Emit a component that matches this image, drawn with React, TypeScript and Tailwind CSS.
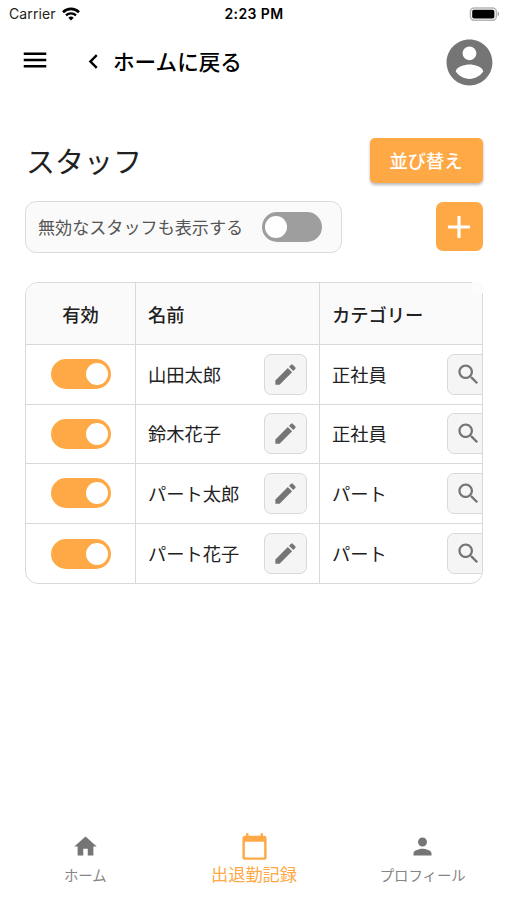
import React, { useState } from 'react';
import clsx from 'clsx';

interface Staff {
  id: number;
  name: string;
  category: string;
  enabled: boolean;
}

const initialStaff: Staff[] = [
  { id: 1, name: '山田太郎', category: '正社員', enabled: true },
  { id: 2, name: '鈴木花子', category: '正社員', enabled: true },
  { id: 3, name: 'パート太郎', category: 'パート', enabled: true },
  { id: 4, name: 'パート花子', category: 'パート', enabled: true },
];

const paths = {
  menu: 'M3 18h18v-2H3v2zm0-5h18v-2H3v2zm0-7v2h18V6H3z',
  back: 'M15.41 7.41 14 6l-6 6 6 6 1.41-1.41L10.83 12z',
  account:
    'M12 2C6.48 2 2 6.48 2 12s4.48 10 10 10 10-4.48 10-10S17.52 2 12 2zm0 3c1.66 0 3 1.34 3 3s-1.34 3-3 3-3-1.34-3-3 1.34-3 3-3zm0 14.2c-2.5 0-4.71-1.28-6-3.22.03-1.99 4-3.08 6-3.08 1.99 0 5.97 1.09 6 3.08-1.29 1.94-3.5 3.22-6 3.22z',
  add: 'M19 13h-6v6h-2v-6H5v-2h6V5h2v6h6v2z',
  edit: 'M3 17.25V21h3.75L17.81 9.94l-3.75-3.75L3 17.25zM20.71 7.04c.39-.39.39-1.02 0-1.41l-2.34-2.34a.9959.9959 0 0 0-1.41 0l-1.83 1.83 3.75 3.75 1.83-1.83z',
  search:
    'M15.5 14h-.79l-.28-.27C15.41 12.59 16 11.11 16 9.5 16 5.91 13.09 3 9.5 3S3 5.91 3 9.5 5.91 16 9.5 16c1.61 0 3.09-.59 4.23-1.57l.27.28v.79l5 4.99L20.49 19l-4.99-5zm-6 0C7.01 14 5 11.99 5 9.5S7.01 5 9.5 5 14 7.01 14 9.5 11.99 14 9.5 14z',
  home: 'M10 20v-6h4v6h5v-8h3L12 3 2 12h3v8z',
  calendar:
    'M20 3h-1V1h-2v2H7V1H5v2H4c-1.1 0-2 .9-2 2v16c0 1.1.9 2 2 2h16c1.1 0 2-.9 2-2V5c0-1.1-.9-2-2-2zm0 18H4V8h16v13z',
  person:
    'M12 12c2.21 0 4-1.79 4-4s-1.79-4-4-4-4 1.79-4 4 1.79 4 4 4zm0 2c-2.67 0-8 1.34-8 4v2h16v-2c0-2.66-5.33-4-8-4z',
};

interface IconProps {
  name: keyof typeof paths;
  className?: string;
}

const Icon: React.FC<IconProps> = ({ name, className }) => (
  <svg viewBox="0 0 24 24" fill="currentColor" className={clsx('shrink-0', className)}>
    <path d={paths[name]} />
  </svg>
);

interface SwitchProps {
  checked: boolean;
  label: string;
  onChange: () => void;
}

const Switch: React.FC<SwitchProps> = ({ checked, label, onChange }) => (
  <button
    type="button"
    role="switch"
    aria-checked={checked}
    aria-label={label}
    onClick={onChange}
    className={clsx(
      'flex h-[30px] w-[60px] shrink-0 items-center rounded-full px-[3px]',
      checked ? 'justify-end bg-[#ffa946]' : 'justify-start bg-[#9e9e9e]'
    )}
  >
    <span className="size-[22px] rounded-full bg-white" />
  </button>
);

const StatusBar: React.FC = () => (
  <div className="grid h-7 grid-cols-3 items-center pr-[6px] pl-[9px] font-['Inter','Liberation_Sans',sans-serif] leading-none text-[#222]">
    <div className="flex items-center gap-[6px]">
      <span className="text-[14px] tracking-[0.1px]">Carrier</span>
      <svg viewBox="0 0 18 14" className="-mt-px h-[14px] w-[18px]" fill="none" stroke="#000" strokeWidth="2.6">
        <path d="M1 5.2a11.4 11.4 0 0 1 16 0" />
        <path d="M4 8.4a7.1 7.1 0 0 1 10 0" strokeWidth="2.3" />
        <path d="M9 13.6 6.3 10.8a3.9 3.9 0 0 1 5.4 0z" fill="#000" stroke="none" />
      </svg>
    </div>
    <span className="pr-[2px] text-center text-[14px] font-semibold tracking-[0.4px] whitespace-nowrap text-black">
      2:23 PM
    </span>
    <svg viewBox="0 0 32 14" className="-mt-px h-[14px] w-8 justify-self-end">
      <rect x="1.4" y="0.9" width="26" height="12.4" rx="4" fill="#fff" stroke="#b5b5b5" strokeWidth="1.5" />
      <rect x="3.2" y="2.7" width="22.2" height="8.8" rx="1.8" fill="#000" />
      <path d="M28.8 4.8c1.6.6 1.6 3.8 0 4.4z" fill="#999" />
    </svg>
  </div>
);

interface NavItemProps {
  icon: keyof typeof paths;
  label: string;
  active?: boolean;
}

const NavItem: React.FC<NavItemProps> = ({ icon, label, active }) => (
  <a
    href="#"
    className={clsx(
      'flex flex-1 flex-col items-center whitespace-nowrap',
      active ? 'pt-[3px] text-[17.2px] text-[#ffa946]' : 'pt-[4px] text-[14.4px] text-[#757575]'
    )}
  >
    <Icon name={icon} className={active ? 'size-[29px]' : 'size-[27px]'} />
    <span className={active ? 'leading-[25px]' : 'mt-[2px] leading-[26px] text-[#858585]'}>{label}</span>
  </a>
);

const App: React.FC = () => {
  const [showDisabled, setShowDisabled] = useState(false);
  const [staff, setStaff] = useState(initialStaff);

  const toggleStaff = (id: number) =>
    setStaff(list => list.map(item => (item.id === id ? { ...item, enabled: !item.enabled } : item)));

  return (
    <div className="flex h-[900px] w-[507px] flex-col overflow-hidden bg-white font-['Noto_Sans_CJK_JP',sans-serif] text-[#212121]">
      <StatusBar />

      <header className="flex h-[68px] items-center pr-[10px] pl-5 text-black">
        <button type="button" aria-label="メニュー" className="-mt-[5px]">
          <Icon name="menu" className="size-[30px]" />
        </button>
        <a href="#" className="-mt-[2px] ml-[29px] flex items-center gap-[5px]">
          <Icon name="back" className="size-[29px]" />
          <span className="-mt-px text-[21.6px] leading-8 font-medium">ホームに戻る</span>
        </a>
        <Icon name="account" className="ml-auto size-[55px] text-[#757575]" />
      </header>

      <main className="flex-1 pt-[42px] pr-6 pl-[25px]">
        <div className="flex items-start justify-between">
          <h1 className="pt-px pl-px text-[29px] leading-[42px]">スタッフ</h1>
          <button
            type="button"
            className="h-[45px] w-[113px] rounded-[5px] bg-[#ffa946] pr-px text-[18.3px] leading-none font-medium text-white shadow-[0_2px_3px_rgba(0,0,0,0.28)]"
          >
            並び替え
          </button>
        </div>

        <div className="mt-[18px] flex items-start justify-between">
          <div className="flex h-[52px] w-[317px] items-center justify-between rounded-[11px] border border-[#dcdcdc] bg-[#fafafa] pr-[19px] pl-3">
            <span className="text-[17.1px] text-[#555]">無効なスタッフも表示する</span>
            <Switch checked={showDisabled} label="無効なスタッフも表示する" onChange={() => setShowDisabled(!showDisabled)} />
          </div>
          <button
            type="button"
            aria-label="追加"
            className="mt-[1px] flex h-[49px] w-[47px] items-center justify-center rounded-[7px] bg-[#ffa946] pr-px text-white"
          >
            <Icon name="add" className="size-[38px]" />
          </button>
        </div>

        <div className="relative mt-[29px]">
          <div className="overflow-hidden rounded-[13px] border border-[#d9d9d9] text-[18.3px]">
            <div className="w-[520px] divide-y divide-[#d9d9d9]">
              <div className="flex h-[62px] items-stretch divide-x divide-[#d9d9d9] bg-[#fafafa] font-medium">
                <div className="flex w-[110px] items-center justify-center pt-[2px]">有効</div>
                <div className="flex w-[184px] items-center pt-[2px] pl-3">名前</div>
                <div className="flex flex-1 items-center pt-[2px] pl-3">カテゴリー</div>
              </div>
              {staff.map(item => (
                <div key={item.id} className="flex h-[59.6px] items-stretch divide-x divide-[#d9d9d9]">
                  <div className="flex w-[110px] items-center justify-center">
                    <Switch checked={item.enabled} label={item.name} onChange={() => toggleStaff(item.id)} />
                  </div>
                  <div className="flex w-[184px] items-center justify-between pr-3 pl-3">
                    <span>{item.name}</span>
                    <button
                      type="button"
                      aria-label="編集"
                      className="flex h-[41px] w-[43px] items-center justify-center rounded-[7px] border border-[#d9d9d9] bg-[#f5f5f5] text-[#757575]"
                    >
                      <Icon name="edit" className="size-[27px]" />
                    </button>
                  </div>
                  <div className="flex flex-1 items-center pl-3">
                    <span className="w-[115px]">{item.category}</span>
                    <button
                      type="button"
                      aria-label="検索"
                      className="flex h-[41px] w-[43px] items-center justify-center rounded-[7px] border border-[#d9d9d9] bg-[#f5f5f5] text-[#757575]"
                    >
                      <Icon name="search" className="size-[27px]" />
                    </button>
                  </div>
                </div>
              ))}
            </div>
          </div>
          <div className="absolute top-0 right-0 size-[11px] rounded-tr-[4px] bg-[#fcfcfc]" />
        </div>
      </main>

      <nav className="flex h-[71px] pl-px">
        <NavItem icon="home" label="ホーム" />
        <NavItem icon="calendar" label="出退勤記録" active />
        <NavItem icon="person" label="プロフィール" />
      </nav>
    </div>
  );
};

export default App;
